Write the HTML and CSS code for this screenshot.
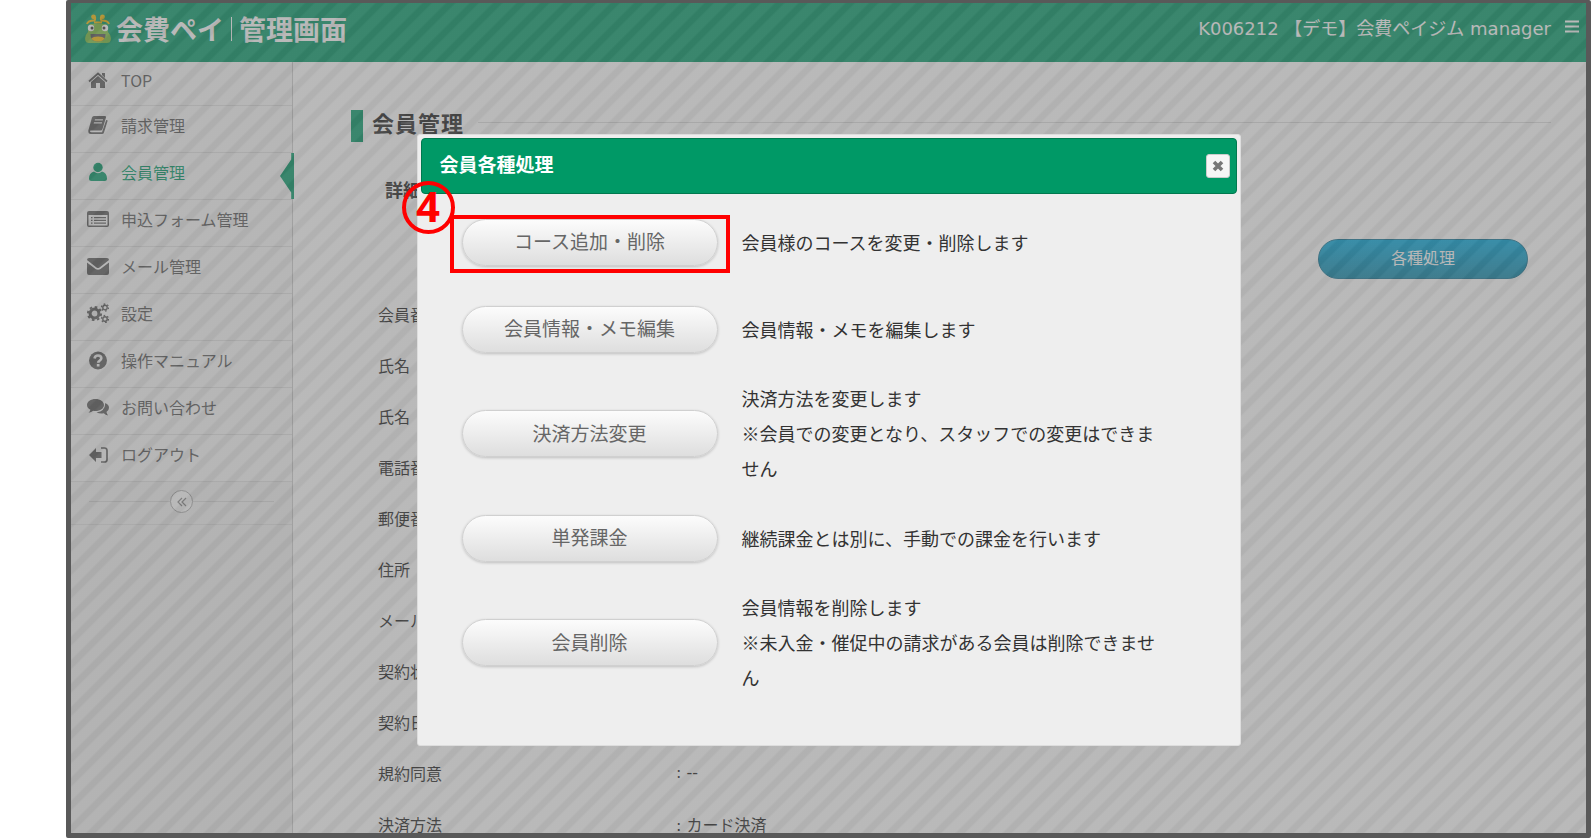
FILE: index.html
```html
<!DOCTYPE html>
<html lang="ja">
<head>
    <meta charset="UTF-8">
    <meta name="viewport" content="width=device-width, initial-scale=1.0">
    <title>会費ペイ 管理画面</title>
    <link rel="stylesheet" href="styles.css">
</head>
<body>

<div class="frame">

    <!-- ヘッダー -->
    <header class="navbar">
        <a href="#" class="brand">
            <svg class="brand-logo" viewBox="0 0 26 30" aria-hidden="true">
                <path d="M2 10 Q3 6.500 9 6.500 Q10.500 6.500 10 3 M24 10 Q23 6.500 17 6.500 Q15.500 6.500 16 3 M9 8.500 H17" fill="none" stroke="#f5b800" stroke-width="2"/>
                <circle cx="8.500" cy="2.800" r="2.400" fill="#f5b800"/>
                <circle cx="17.500" cy="2.800" r="2.400" fill="#f5b800"/>
                <path d="M4 11 Q5 9.500 13 9.500 Q21 9.500 22 11 L23 18 Q27 22 25.500 27 Q25 29 22 29 H4 Q1 29 0.500 27 Q-1 22 3 18 Z" fill="#7fc241"/>
                <circle cx="6" cy="14" r="3.200" fill="#fff"/>
                <circle cx="20" cy="14" r="3.200" fill="#fff"/>
                <circle cx="7" cy="14" r="1.500" fill="#333"/>
                <circle cx="19" cy="14" r="1.500" fill="#333"/>
                <path d="M5.500 20 H20.500 Q21 27.500 13 27.500 Q5 27.500 5.500 20 Z" fill="#555"/>
                <path d="M6.500 24.500 Q8 22.500 13 22.500 Q18 22.500 19.500 24.500 Q18 27.500 13 27.500 Q8 27.500 6.500 24.500 Z" fill="#f5b800"/>
            </svg>
            <span>会費ペイ</span><span class="brand-sub">管理画面</span>
        </a>
        <div class="account">
            <span>K006212 【デモ】会費ペイジム manager</span>
            <button type="button" class="menu-button" aria-label="メニュー">
                <svg viewBox="0 0 14 13"><path d="M0 1.500H14M0 6.500H14M0 11.500H14" stroke="#fff" stroke-width="2"/></svg>
            </button>
        </div>
    </header>

    <div class="layout">

        <!-- サイドバー -->
        <nav class="sidebar">
            <a href="#">
                <svg viewBox="0 0 22 20"><path d="M11 6 L18 12 V18 H13 V13 H9 V18 H4 V12 Z"/><path d="M2 11.500 L11 3.500 L20 11.500" fill="none" stroke="currentColor" stroke-width="1.800"/><path d="M15 3H18V8L15 5Z"/></svg>
                TOP
            </a>
            <a href="#">
                <svg viewBox="0 0 22 20"><path fill-rule="evenodd" d="M7 1 H18 Q19.500 1 19 2.500 L15.500 14 Q15 15.500 13.500 15.500 H4 Q2.500 15.500 3 16.500 Q3.300 17.300 4.500 17.300 H15 L19.200 5 L20.700 5.500 L17 17.500 Q16.500 19 15 19 H4 Q1 19 1.300 15.500 L5 2.500 Q5.500 1 7 1 Z M8 4.200 L7.600 5.400 H15.700 L16.100 4.200 Z M7 7.200 L6.600 8.400 H14.700 L15.100 7.200 Z"/></svg>
                請求管理
            </a>
            <a href="#" class="active">
                <svg viewBox="0 0 22 20"><circle cx="11" cy="5.500" r="4.700"/><path d="M7 9.500 Q11 13 15 9.500 Q20 11 20 16.500 Q20 19 17.500 19 H4.500 Q2 19 2 16.500 Q2 11 7 9.500 Z"/></svg>
                会員管理
            </a>
            <a href="#">
                <svg viewBox="0 0 22 20"><path fill-rule="evenodd" d="M2 2 H20 Q22 2 22 4 V16 Q22 18 20 18 H2 Q0 18 0 16 V4 Q0 2 2 2 Z M1.500 6 V16.500 H20.500 V6 Z"/><path d="M4 8H5.500V9.300H4Z M7 8H19V9.300H7Z M4 10.700H5.500V12H4Z M7 10.700H19V12H7Z M4 13.400H5.500V14.700H4Z M7 13.400H19V14.700H7Z"/></svg>
                申込フォーム管理
            </a>
            <a href="#">
                <svg viewBox="0 0 22 20"><path d="M2 2 H20 Q22 2 22 4 L12.500 11.500 Q11 12.500 9.500 11.500 L0 4 Q0 2 2 2 Z M0 6.500 L8.500 13 Q11 14.500 13.500 13 L22 6.500 V17 Q22 19 20 19 H2 Q0 19 0 17 Z"/></svg>
                メール管理
            </a>
            <a href="#">
                <svg class="gears" viewBox="0 0 22 20"><circle cx="7.500" cy="10.500" r="4.400" stroke-width="3"/><circle cx="7.500" cy="10.500" r="6.600" stroke-width="2" stroke-dasharray="2.600 2.584"/><circle cx="18" cy="4.500" r="2.200" stroke-width="1.400"/><circle cx="18" cy="4.500" r="3.500" stroke-width="1.400" stroke-dasharray="1.600 2.065"/><circle cx="18" cy="16" r="2.200" stroke-width="1.400"/><circle cx="18" cy="16" r="3.500" stroke-width="1.400" stroke-dasharray="1.600 2.065"/></svg>
                設定
            </a>
            <a href="#">
                <svg viewBox="0 0 22 20"><circle cx="11" cy="10.500" r="9"/><path d="M7.500 8.500 Q8 5.500 11 5.500 Q14.300 5.500 14.300 8.300 Q14.300 10 12.500 10.800 Q11.200 11.500 11.200 12.800" fill="none" stroke="#f9f9f9" stroke-width="2.600"/><path d="M9.800 14H12.500V16.500H9.800Z" fill="#f9f9f9"/></svg>
                操作マニュアル
            </a>
            <a href="#">
                <svg viewBox="0 0 22 20"><path d="M8.500 2 C13.200 2 17 4.600 17 8 C17 11.400 13.200 14 8.500 14 Q7.300 14 6.200 13.800 Q4.500 15.500 1.500 15.700 Q3.200 14.500 3.400 12.800 Q0 11 0 8 C0 4.600 3.800 2 8.500 2 Z"/><path d="M18.300 6 Q22 7.800 22 10.800 Q22 13.500 19.500 15 Q19.800 17 21.200 18.500 Q18.500 18.300 16.700 16.300 Q12.500 17 9.500 15.300 Q18 14.500 18.300 6 Z"/></svg>
                お問い合わせ
            </a>
            <a href="#">
                <svg viewBox="0 0 22 20"><path d="M2 11 L9 4 V8 H14.500 V14 H9 V18 Z"/><path d="M14 4 H17.500 Q20 4 20 6.500 V15.500 Q20 18 17.500 18 H14" fill="none" stroke="currentColor" stroke-width="1.700"/></svg>
                ログアウト
            </a>
            <div class="collapse">
                <button type="button" aria-label="メニューを閉じる">
                    <svg viewBox="0 0 10 10"><path d="M5 1L1 5L5 9M9 1L5 5L9 9" fill="none" stroke="currentColor" stroke-width="1.200"/></svg>
                </button>
            </div>
        </nav>

        <!-- 会員の詳細 -->
        <main class="content">
            <h1>会員管理</h1>
            <h2>詳細</h2>
            <div class="actions">
                <button type="button" class="button-blue">各種処理</button>
            </div>
            <dl class="detail">
                <dt>会員番号</dt><dd></dd>
                <dt>氏名</dt><dd></dd>
                <dt>氏名</dt><dd></dd>
                <dt>電話番号</dt><dd></dd>
                <dt>郵便番号</dt><dd></dd>
                <dt>住所</dt><dd></dd>
                <dt>メール</dt><dd></dd>
                <dt>契約状</dt><dd></dd>
                <dt>契約日</dt><dd></dd>
                <dt>規約同意</dt><dd>: --</dd>
                <dt>決済方法</dt><dd>: カード決済</dd>
            </dl>
        </main>
    </div>

    <!-- モーダル -->
    <div class="overlay">
        <div class="dialog" role="dialog" aria-labelledby="dialogTitle">
            <div class="dialog-title">
                <h3 id="dialogTitle">会員各種処理</h3>
                <button type="button" class="close" aria-label="閉じる">
                    <svg viewBox="0 0 12 12"><path d="M2 2L10 10M10 2L2 10" stroke="#777" stroke-width="3.600"/></svg>
                </button>
            </div>
            <div class="dialog-body">
                <div class="row">
                    <div class="marked">
                        <button type="button" class="button-gray">コース追加・削除</button>
                        <span class="step">4</span>
                    </div>
                    <p>会員様のコースを変更・削除します</p>
                </div>
                <div class="row">
                    <button type="button" class="button-gray">会員情報・メモ編集</button>
                    <p>会員情報・メモを編集します</p>
                </div>
                <div class="row">
                    <button type="button" class="button-gray">決済方法変更</button>
                    <p>決済方法を変更します<br>※会員での変更となり、スタッフでの変更はできません</p>
                </div>
                <div class="row">
                    <button type="button" class="button-gray">単発課金</button>
                    <p>継続課金とは別に、手動での課金を行います</p>
                </div>
                <div class="row">
                    <button type="button" class="button-gray">会員削除</button>
                    <p>会員情報を削除します<br>※未入金・催促中の請求がある会員は削除できません</p>
                </div>
            </div>
        </div>
    </div>
</div>

</body>
</html>
```

FILE: styles.css
```css
* {
    box-sizing: border-box;
    margin: 0;
    padding: 0;
}

body {
    height: 100vh;
    padding: 0 3px 2px 66px;
    background-color: #fff;
    color: #222;
    font-family: "Noto Sans CJK JP", sans-serif;
    font-size: 16px;
}

button {
    font: inherit;
    cursor: pointer;
}

a {
    color: inherit;
    text-decoration: none;
}

.frame {
    position: relative;
    display: flex;
    flex-direction: column;
    height: 100%;
    border: 5px solid #595959;
    border-top-width: 3px;
    border-radius: 2px;
    overflow: hidden;
}

/* ヘッダー */
.navbar {
    display: flex;
    flex: none;
    justify-content: space-between;
    height: 59px;
    padding: 0 7px 0 14px;
    background-color: #096;
    color: #fff;
}

.brand {
    display: flex;
    align-items: center;
    height: 51px;
    font-size: 27px;
    font-weight: 700;
}

.brand-logo {
    width: 26px;
    height: 30px;
    margin-right: 5px;
}

.brand-sub {
    margin-left: 7px;
    padding-left: 7px;
    border-left: 1px solid #fff;
    line-height: 24px;
}

.account {
    display: flex;
    align-items: center;
    gap: 14px;
    height: 47px;
    font-family: "DejaVu Sans", "Noto Sans CJK JP", sans-serif;
    font-size: 18px;
}

.menu-button {
    width: 14px;
    height: 16px;
    border: none;
    background: none;
}

.menu-button svg {
    display: block;
    width: 14px;
}

.layout {
    display: flex;
    flex: 1;
    min-height: 0;
}

/* サイドバー */
.sidebar {
    flex: none;
    width: 222px;
    border-right: 1px solid #ccc;
    background-color: #f2f2f2;
    color: #585858;
}

.sidebar a {
    position: relative;
    display: flex;
    align-items: center;
    gap: 12px;
    height: 47px;
    padding: 0 0 8px 16px;
    border-bottom: 1px solid #e0e0e0;
    background-color: #f9f9f9;
}

.sidebar a:first-child {
    height: 44px;
}

.sidebar a svg {
    width: 22px;
    height: 20px;
    fill: currentColor;
}

.sidebar a .gears {
    fill: none;
    stroke: currentColor;
}

.sidebar .active {
    color: #096;
}

.sidebar .active::after {
    content: "";
    position: absolute;
    top: 0;
    right: -2px;
    width: 14px;
    height: 46px;
    background-color: #096;
    clip-path: polygon(100% 0, 100% 100%, 80% 100%, 80% 86%, 0 50%, 80% 14%, 80% 0);
}

.collapse {
    display: flex;
    align-items: center;
    height: 43px;
    padding: 0 18px 3px;
    border-bottom: 1px solid #e0e0e0;
}

.collapse::before,
.collapse::after {
    content: "";
    flex: 1;
    height: 1px;
    background-color: #d8d8d8;
}

.collapse button {
    display: flex;
    align-items: center;
    justify-content: center;
    width: 23px;
    height: 23px;
    border: 1px solid #aaa;
    border-radius: 50%;
    background-color: #fff;
    color: #888;
}

.collapse svg {
    width: 10px;
}

/* 会員の詳細 */
.content {
    flex: 1;
    padding: 48px 35px 0 58px;
    overflow: hidden;
}

h1 {
    display: flex;
    align-items: center;
    gap: 14px;
    height: 32px;
    padding: 0 0 8px 9px;
    border-left: 12px solid #096;
    font-size: 22px;
    font-weight: 700;
    letter-spacing: 1px;
}

h1::after {
    content: "";
    flex: 1;
    height: 1px;
    background-color: #ddd;
}

h2 {
    margin: 34px 0 0 34px;
    font-size: 18px;
    font-weight: 700;
    line-height: 26px;
}

.actions {
    display: flex;
    justify-content: flex-end;
    margin-top: 37px;
    padding-right: 23px;
}

.button-blue {
    width: 210px;
    height: 40px;
    padding-bottom: 4px;
    border: 1px solid #0d7394;
    border-radius: 20px;
    background: linear-gradient(#00a8dd, #0c86a8);
    color: #fff;
}

.detail {
    display: grid;
    grid-template-columns: 298px 1fr;
    grid-auto-rows: 51px;
    align-items: center;
    padding: 9px 0 0 27px;
    font-family: "DejaVu Sans", "Noto Sans CJK JP", sans-serif;
}

/* モーダル */
.overlay {
    position: absolute;
    inset: 0;
    display: flex;
    align-items: flex-start;
    justify-content: center;
    padding-top: 131px;
    background: linear-gradient(135deg,
        rgba(116, 116, 116, .5) 6%, rgba(100, 100, 100, .5) 9% 16%,
        rgba(116, 116, 116, .5) 19% 31%, rgba(100, 100, 100, .5) 34% 41%,
        rgba(116, 116, 116, .5) 44% 56%, rgba(100, 100, 100, .5) 59% 66%,
        rgba(116, 116, 116, .5) 69% 81%, rgba(100, 100, 100, .5) 84% 91%,
        rgba(116, 116, 116, .5) 94%) -8px 0 / 47px 47px;
}

.dialog {
    width: 824px;
    height: 612px;
    padding: 3px;
    border: 1px solid #ddd;
    border-radius: 3px;
    background-color: #eee;
}

.dialog-title {
    display: flex;
    align-items: center;
    justify-content: space-between;
    height: 56px;
    padding: 0 6px 0 18px;
    border: 1px solid #00794f;
    border-radius: 4px;
    background-color: #096;
    color: #fff;
}

.dialog-title h3 {
    padding-bottom: 6px;
    font-size: 19px;
    font-weight: 700;
}

.close {
    display: flex;
    align-items: center;
    justify-content: center;
    width: 24px;
    height: 24px;
    border: 1px solid #ccc;
    border-radius: 3px;
    background-color: #f6f6f6;
}

.close svg {
    width: 12px;
}

.dialog-body {
    display: flex;
    flex-direction: column;
    gap: 17px;
    padding: 13px 80px 0 41px;
}

.row {
    display: flex;
    align-items: center;
    gap: 24px;
    min-height: 70px;
}

.row p {
    flex: 1;
    color: #333;
    font-size: 18px;
    line-height: 35px;
}

.button-gray {
    flex: none;
    width: 256px;
    height: 47px;
    padding-bottom: 3px;
    border: 1px solid #d0d0d0;
    border-radius: 24px;
    background: linear-gradient(#fcfcfc, #dedede);
    box-shadow: 0 1px 3px rgba(0, 0, 0, .2);
    color: #666;
    font-size: 19px;
}

/* 手順の番号と枠 */
.marked {
    position: relative;
}

.marked::before {
    content: "";
    position: absolute;
    inset: -4px -12px -7px -12px;
    border: 4px solid #f00;
}

.step {
    position: absolute;
    top: -38px;
    left: -60px;
    display: flex;
    align-items: center;
    justify-content: center;
    width: 53px;
    height: 53px;
    padding-bottom: 4px;
    border: 4px solid #f00;
    border-radius: 50%;
    color: #f00;
    font-family: "Noto Sans", sans-serif;
    font-size: 42px;
    font-weight: 700;
}
```
